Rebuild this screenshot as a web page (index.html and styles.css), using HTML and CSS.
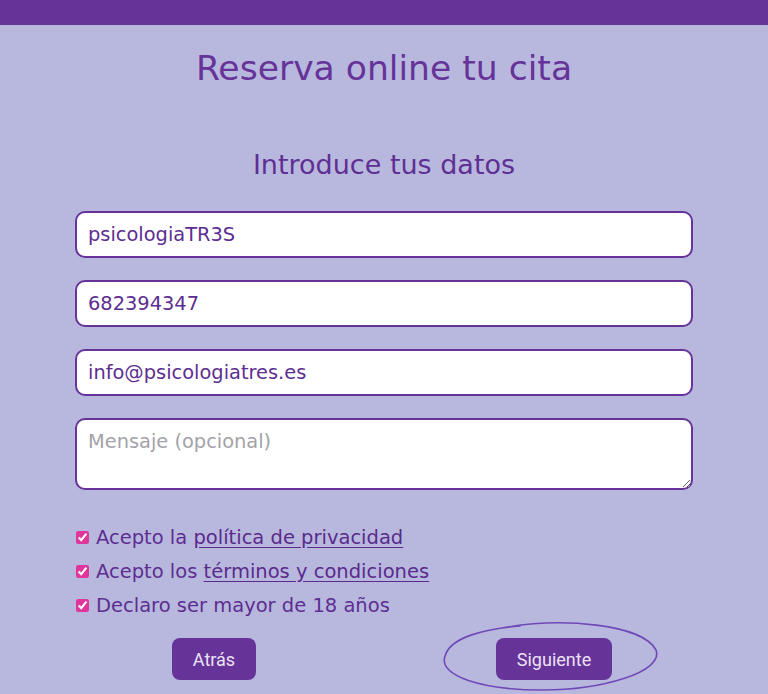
FILE: index.html
```html
<!DOCTYPE html>
<html lang="es">
<head>
<meta charset="utf-8">
<title>Reserva online tu cita</title>
<link rel="stylesheet" href="styles.css">
</head>
<body>
<div class="topbar"></div>
<main class="page">
  <h1 class="title">Reserva online tu cita</h1>
  <h2 class="subtitle">Introduce tus datos</h2>
  <form class="form">
    <input class="field" type="text" value="psicologiaTR3S">
    <input class="field" type="text" value="682394347">
    <input class="field" type="text" value="info@psicologiatres.es">
    <textarea class="field area" placeholder="Mensaje (opcional)"></textarea>
    <div class="checks">
      <label class="check"><input type="checkbox" checked><span>Acepto la <a href="#">política de privacidad</a></span></label>
      <label class="check"><input type="checkbox" checked><span>Acepto los <a href="#">términos y condiciones</a></span></label>
      <label class="check"><input type="checkbox" checked><span>Declaro ser mayor de 18 años</span></label>
    </div>
    <div class="actions">
      <div class="slot back"><button type="button" class="btn">Atrás</button></div>
      <div class="slot next">
        <button type="button" class="btn">Siguiente</button>
        <svg class="circle" width="218" height="74" viewBox="0 0 218 74" aria-hidden="true">
          <path d="M 60 8 C 120 -3, 200 4, 214 30 C 222 52, 160 70, 100 70 C 40 70, -4 56, 3 36 C 8 18, 40 9, 78 6" fill="none" stroke="#7049b8" stroke-width="1.6" stroke-linecap="round"/>
        </svg>
      </div>
    </div>
  </form>
</main>
</body>
</html>
```
FILE: styles.css
```css
html, body {
  margin: 0;
  padding: 0;
}
body {
  background: #b8b8de;
  font-family: "DejaVu Sans", "Noto Sans", sans-serif;
  color: #5d2e91;
  min-height: 694px;
}
.topbar {
  height: 25px;
  background: #663399;
}
.page {
  width: 618px;
  margin: 0 auto;
}
.title {
  margin: 21px 0 0;
  font-size: 34.6px;
  line-height: 44px;
  font-weight: 400;
  text-align: center;
  color: #663399;
}
.subtitle {
  margin: 59px 0 0;
  font-size: 27px;
  line-height: 32px;
  font-weight: 400;
  text-align: center;
  color: #5f2f93;
}
.form {
  margin-top: 30px;
  display: flex;
  flex-direction: column;
}
.field {
  display: block;
  box-sizing: border-box;
  width: 100%;
  height: 47px;
  margin: 0 0 22px;
  padding: 0 11px;
  border: 2px solid #663399;
  border-radius: 10px;
  background: #fff;
  font-family: "DejaVu Sans", "Noto Sans", sans-serif;
  font-size: 19.4px;
  color: #5d2e91;
  outline: none;
}
.area {
  height: 72px;
  margin-bottom: 30px;
  padding-top: 10px;
  resize: vertical;
}
.area::placeholder {
  color: #a3a3a8;
}
.checks {
  display: flex;
  flex-direction: column;
}
.check {
  height: 34px;
  display: flex;
  align-items: center;
  gap: 7px;
  font-size: 19.5px;
  color: #5d2e91;
}
.check input {
  margin: 0 0 0 1px;
  width: 13px;
  height: 13px;
  accent-color: #e0369c;
}
.check a {
  color: #5a2a8c;
  text-decoration: underline;
  text-underline-offset: 3px;
}
.actions {
  margin: 16px -31px 0;
  display: grid;
  grid-template-columns: 340px 340px;
  justify-items: center;
}
.slot {
  position: relative;
}
.btn {
  height: 42px;
  padding: 0;
  border: none;
  border-radius: 8px;
  background: #663399;
  color: #ece2f7;
  font-family: Roboto, "Liberation Sans", sans-serif;
  font-size: 18px;
}
.back .btn {
  width: 84px;
}
.next .btn {
  width: 116px;
}
.circle {
  position: absolute;
  left: -54px;
  top: -18px;
  pointer-events: none;
}
```
